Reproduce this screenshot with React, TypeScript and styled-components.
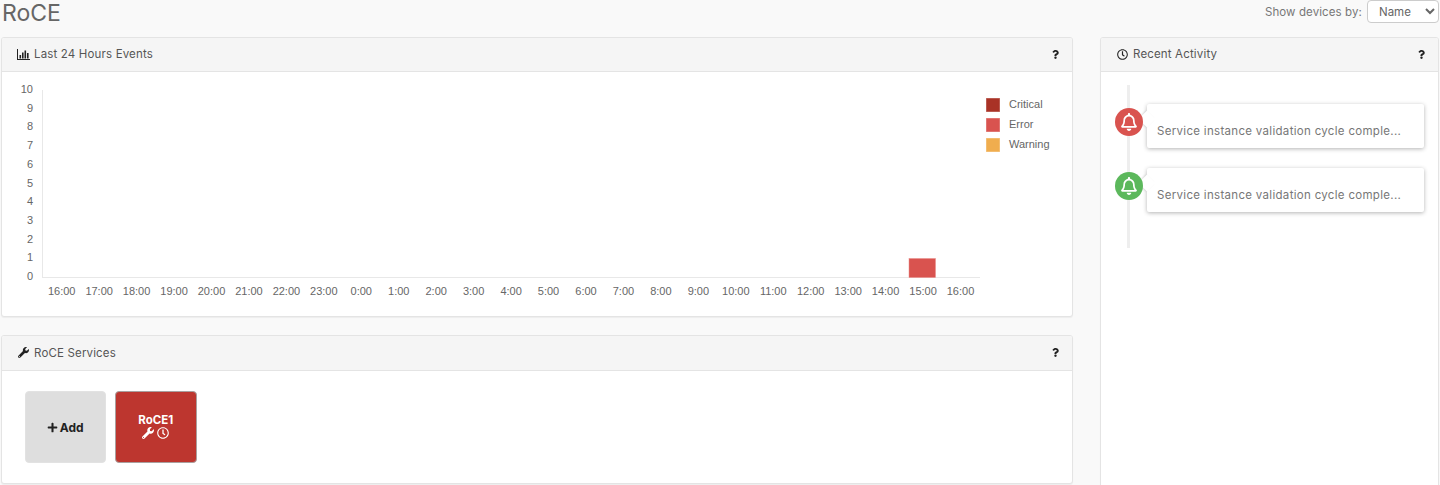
import React from "react";
import styled, { createGlobalStyle } from "styled-components";
import { FaWrench, FaRegClock, FaRegBell, FaQuestion, FaPlus } from "react-icons/fa";

const Global = createGlobalStyle`
  html, body { margin: 0; padding: 0; height: 485px; overflow: hidden; background: #f9f9f9; }
  body { font-family: Inter, "Open Sans", sans-serif; color: #555; }
`;

const Page = styled.div`
  width: 1440px;
  height: 485px;
  overflow: hidden;
  box-sizing: border-box;
  padding: 0 1px 0 1px;
`;
const TopBar = styled.div`
  display: flex;
  justify-content: space-between;
  align-items: flex-start;
  height: 37px;
`;
const Title = styled.h1`
  margin: 0;
  padding: 1px 0 0 1px;
  font-size: 23px;
  line-height: 24px;
  font-weight: 400;
  color: #666;
`;
const DeviceFilter = styled.div`
  display: flex;
  align-items: center;
  gap: 5px;
  font-size: 11.5px;
  letter-spacing: 0.1px;
  color: #777;
  height: 23px;
`;
const Select = styled.select`
  width: 72px;
  height: 23px;
  padding: 0 0 0 7px;
  border: 1px solid #ccc;
  border-radius: 4px;
  background: #fff;
  font: inherit;
  color: #666;
`;
const Columns = styled.div`
  display: grid;
  grid-template-columns: 1072px 339px;
  column-gap: 27px;
  align-items: start;
`;
const Stack = styled.div`
  display: flex;
  flex-direction: column;
  gap: 18px;
`;
const Panel = styled.section<{ $height: number }>`
  box-sizing: border-box;
  height: ${(p) => p.$height}px;
  background: #fff;
  border: 1px solid #e4e4e4;
  border-radius: 3px;
  box-shadow: 0 1px 1px rgba(0, 0, 0, 0.05);
  overflow: hidden;
`;
const PanelHeader = styled.header<{ $height?: number }>`
  box-sizing: border-box;
  height: ${(p) => p.$height ?? 34}px;
  display: flex;
  align-items: center;
  gap: 4px;
  padding: 0 12px 1px 15px;
  background: #f5f5f5;
  border-bottom: 1px solid #e4e4e4;
  font-size: 11.5px;
  letter-spacing: 0.16px;
  color: #555;
  svg { color: #222; flex: none; }
`;
const IconSlot = styled.span`
  width: 13px;
  display: flex;
  justify-content: center;
  flex: none;
`;
const HeaderTitle = styled.span`
  flex: 1;
`;
const ChartBody = styled.div`
  height: 245px;
`;
const ChartSvg = styled.svg`
  display: block;
  text {
    font-family: "Liberation Sans", Arial, sans-serif;
    font-size: 11px;
    fill: #666;
  }
`;
const ServiceGrid = styled.div`
  display: flex;
  gap: 9px;
  padding: 20px 0 0 22.5px;
`;
const Tile = styled.div<{ $bg: string; $fg: string; $edge: string }>`
  box-sizing: border-box;
  width: 81.5px;
  height: 72px;
  display: flex;
  flex-direction: column;
  align-items: center;
  justify-content: center;
  border-radius: 4px;
  border: 1px solid ${(p) => p.$edge};
  background: ${(p) => p.$bg};
  color: ${(p) => p.$fg};
  font-size: 11.5px;
  font-weight: 700;
  line-height: 13px;
  padding-bottom: 2px;
`;
const TileIcons = styled.div`
  display: flex;
  gap: 3px;
  align-items: center;
`;
const AddLabel = styled.div`
  display: flex;
  align-items: center;
  gap: 2px;
  font-size: 12px;
  padding-top: 2px;
`;
const Timeline = styled.div`
  position: relative;
  height: 163px;
  margin: 13px 0 0 26px;
  &::before {
    content: "";
    position: absolute;
    left: 0;
    top: 0;
    bottom: 0;
    width: 3px;
    background: #eee;
  }
`;
const TimelineList = styled.div`
  display: flex;
  flex-direction: column;
  gap: 20px;
  padding: 19px 0 0 20px;
`;
const Entry = styled.div`
  position: relative;
`;
const Badge = styled.div<{ $color: string }>`
  position: absolute;
  left: -32px;
  top: 4px;
  width: 28px;
  height: 28px;
  border-radius: 50%;
  background: ${(p) => p.$color};
  color: #fff;
  display: flex;
  align-items: center;
  justify-content: center;
  z-index: 2;
`;
const Card = styled.div`
  position: relative;
  box-sizing: border-box;
  width: 277px;
  height: 44px;
  padding: 20px 10px 0;
  background: #fff;
  border-radius: 2px;
  box-shadow: 0 1px 4px rgba(0, 0, 0, 0.3);
  font-size: 11.5px;
  line-height: 14px;
  letter-spacing: 0.31px;
  color: #777;
  &::before {
    content: "";
    position: absolute;
    left: -6px;
    top: 9px;
    width: 12px;
    height: 12px;
    background: #fff;
    transform: rotate(45deg);
    box-shadow: -1px 1px 2px rgba(0, 0, 0, 0.12);
  }
`;
const CardText = styled.div`
  position: relative;
  white-space: nowrap;
`;

const hours = ["16:00","17:00","18:00","19:00","20:00","21:00","22:00","23:00","0:00","1:00","2:00","3:00","4:00","5:00","6:00","7:00","8:00","9:00","10:00","11:00","12:00","13:00","14:00","15:00","16:00"];
const legend = [
  { label: "Critical", color: "#a93226" },
  { label: "Error", color: "#d9534f" },
  { label: "Warning", color: "#f0ad4e" },
];

const ChartIcon = () => (
  <svg width="13" height="11" viewBox="0 0 13 11" aria-hidden="true">
    <path d="M0 0h1v10h12v1H0z" fill="currentColor" />
    <path d="M2.5 6h1.6v3.5H2.5zM5 3.5h1.6v6H5zM7.5 1.5h1.6v8H7.5zM10 4h1.6v5.5H10z" fill="currentColor" />
  </svg>
);

const EventsChart = () => (
  <ChartSvg width="1070" height="245" viewBox="0 0 1070 245">
    {Array.from({ length: 11 }, (_, i) => (
      <text key={i} x="31" y={208 - i * 18.7} textAnchor="end">{i}</text>
    ))}
    <line x1="40.5" y1="18" x2="40.5" y2="205.5" stroke="#e8e8e8" />
    <line x1="40" y1="205.5" x2="978" y2="205.5" stroke="#e8e8e8" />
    {hours.map((h, i) => (
      <text key={i} x={59.7 + i * 37.45} y="223" textAnchor="middle">{h}</text>
    ))}
    <rect x="907" y="186.5" width="26.5" height="19" fill="#d9534f" stroke="#e98b88" strokeWidth="0.5" />
    {legend.map((l, i) => (
      <g key={l.label}>
        <rect x="984" y={26 + i * 20} width="14" height="14" fill={l.color} stroke="#fff" strokeOpacity="0.4" />
        <text x="1007" y={36 + i * 20}>{l.label}</text>
      </g>
    ))}
  </ChartSvg>
);

export default function App() {
  return (
    <Page>
      <Global />
      <TopBar>
        <Title>RoCE</Title>
        <DeviceFilter>
          Show devices by:
          <Select defaultValue="Name"><option>Name</option></Select>
        </DeviceFilter>
      </TopBar>
      <Columns>
        <Stack>
          <Panel $height={280}>
            <PanelHeader>
              <IconSlot><ChartIcon /></IconSlot>
              <HeaderTitle>Last 24 Hours Events</HeaderTitle>
              <FaQuestion size={9} />
            </PanelHeader>
            <ChartBody><EventsChart /></ChartBody>
          </Panel>
          <Panel $height={149}>
            <PanelHeader $height={35}>
              <IconSlot><FaWrench size={11} /></IconSlot>
              <HeaderTitle>RoCE Services</HeaderTitle>
              <FaQuestion size={9} />
            </PanelHeader>
            <ServiceGrid>
              <Tile $bg="#dedede" $fg="#222" $edge="#e2e2e2">
                <AddLabel><FaPlus size={11} />Add</AddLabel>
              </Tile>
              <Tile $bg="#bd362f" $fg="#fff" $edge="#a9a09f">
                RoCE1
                <TileIcons><FaWrench size={12} /><FaRegClock size={12} /></TileIcons>
              </Tile>
            </ServiceGrid>
          </Panel>
        </Stack>
        <Panel $height={460}>
          <PanelHeader>
            <IconSlot><FaRegClock size={11} /></IconSlot>
            <HeaderTitle>Recent Activity</HeaderTitle>
            <FaQuestion size={9} />
          </PanelHeader>
          <Timeline>
            <TimelineList>
              <Entry>
                <Badge $color="#d9534f"><FaRegBell size={18} /></Badge>
                <Card><CardText>Service instance validation cycle comple...</CardText></Card>
              </Entry>
              <Entry>
                <Badge $color="#5cb85c"><FaRegBell size={18} /></Badge>
                <Card><CardText>Service instance validation cycle comple...</CardText></Card>
              </Entry>
            </TimelineList>
          </Timeline>
        </Panel>
      </Columns>
    </Page>
  );
}
